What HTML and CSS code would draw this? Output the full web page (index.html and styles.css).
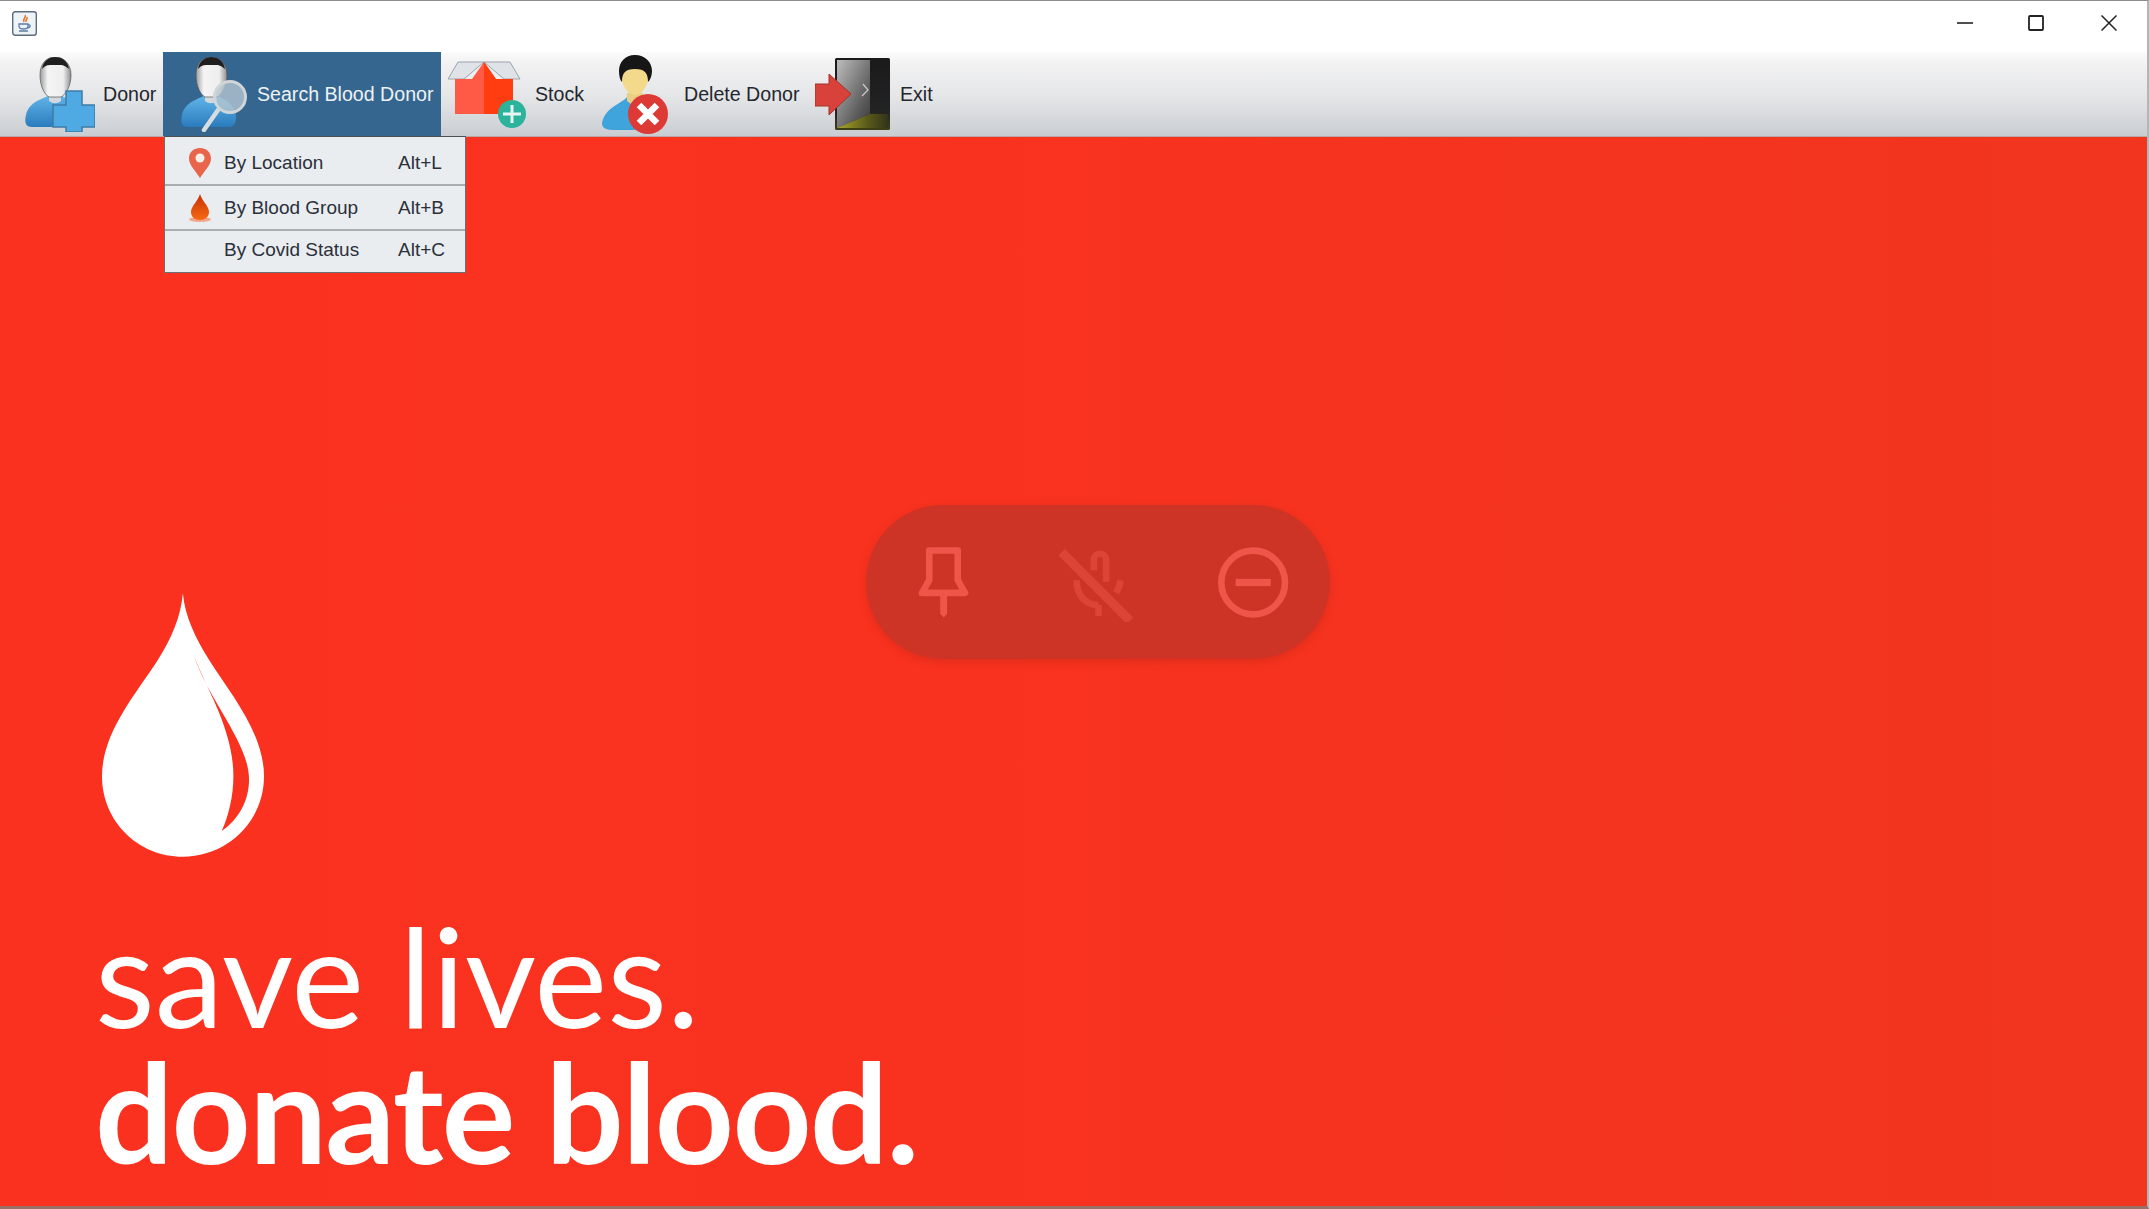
FILE: index.html
```html
<!DOCTYPE html>
<html lang="en">
<head>
    <meta charset="UTF-8">
    <meta name="viewport" content="width=device-width, initial-scale=1.0">
    <title>Blood Bank</title>
    <link rel="stylesheet" href="styles.css">
</head>
<body>
    <svg class="defs" width="0" height="0">
        <defs>
            <linearGradient id="faceGrey" x1="0" y1="0" x2="1" y2="0">
                <stop offset="0" stop-color="#9d9d9d"/>
                <stop offset="0.25" stop-color="#f4f4f4"/>
                <stop offset="0.75" stop-color="#eeeeee"/>
                <stop offset="1" stop-color="#8e8e8e"/>
            </linearGradient>
            <linearGradient id="shirt" x1="0" y1="0" x2="0" y2="1">
                <stop offset="0" stop-color="#62b6ea"/>
                <stop offset="1" stop-color="#2a7bbd"/>
            </linearGradient>
            <linearGradient id="door" x1="0" y1="0" x2="1" y2="1">
                <stop offset="0" stop-color="#bdbdbd"/>
                <stop offset="0.7" stop-color="#5c5c5c"/>
                <stop offset="1" stop-color="#3a3a3a"/>
            </linearGradient>
            <linearGradient id="doorDark" x1="0" y1="0" x2="0" y2="1">
                <stop offset="0" stop-color="#1a1a1a"/>
                <stop offset="0.75" stop-color="#232323"/>
                <stop offset="1" stop-color="#3f3f16"/>
            </linearGradient>
            <linearGradient id="doorFloor" x1="0" y1="0" x2="1" y2="0">
                <stop offset="0" stop-color="#a8a62c"/>
                <stop offset="0.6" stop-color="#5a5a1a"/>
                <stop offset="1" stop-color="#33331a"/>
            </linearGradient>
            <linearGradient id="bloodFill" x1="0" y1="0" x2="0" y2="1">
                <stop offset="0" stop-color="#c92f05"/>
                <stop offset="1" stop-color="#f56a12"/>
            </linearGradient>
            <symbol id="bust" viewBox="0 0 62 75">
                <path d="M25 38C20 42 5 44 2 58C0 66 2 70 8 70L50 70C56 70 58 60 54 52C50 44 42 42 37 38C34 44 28 44 25 38Z" fill="url(#shirt)"/>
                <path d="M25 36L37 36L37 44C33 47 29 47 25 44Z" fill="#d5d8da"/>
                <path d="M16 18C16 6 23 0 31 0C39 0 47 6 47 18C47 30 41 38 37 40L25 40C21 38 16 30 16 18Z" fill="url(#faceGrey)" stroke="#555" stroke-width="0.7"/>
                <path d="M18 12C19 4 25 0 31 0C38 0 44 4 45 12C40 7 36 8 31 8C26 8 22 7 18 12Z" fill="#1f1f1f"/>
            </symbol>
        </defs>
    </svg>

    <div class="window">
        <div class="titlebar">
            <svg class="app-icon" viewBox="0 0 25 25">
                <rect x="0.7" y="0.7" width="23.6" height="23.6" rx="2.5" fill="#eef3f8" stroke="#5d6c7c" stroke-width="1.4"/>
                <path d="M13 4C15 6 10 8 12 11M15 6C16 8 13 9 14 11" fill="none" stroke="#e2711d" stroke-width="1.5"/>
                <path d="M7 13H16V15C16 17 14 18 11.500 18C9 18 7 17 7 15ZM16 14C19 13 19 17 15 17M7 20H16" fill="none" stroke="#5a7ea6" stroke-width="1.3"/>
            </svg>
            <div class="win-controls">
                <svg viewBox="0 0 16 16"><path d="M0 8H16" stroke="#222" stroke-width="1.6"/></svg>
                <svg viewBox="0 0 16 16"><rect x="1" y="1" width="14" height="14" rx="1" fill="none" stroke="#222" stroke-width="1.8"/></svg>
                <svg class="win-close" viewBox="0 0 16 16"><path d="M0.500 0.500L15.500 15.500M15.500 0.500L0.500 15.500" stroke="#222" stroke-width="1.5"/></svg>
            </div>
        </div>

        <div class="toolbar">
            <div class="tool tool-donor">
                <svg class="icon-donor" viewBox="0 0 71 75">
                    <use href="#bust" x="0" y="0" width="62" height="75"/>
                    <path d="M42 34H58V48H71V70H58V75H42V70H29V48H42Z" fill="#4fa9e2" stroke="#3f7ba8" stroke-width="1.500"/>
                </svg>
                <span>Donor</span>
            </div>
            <div class="tool tool-active">
                <svg class="icon-search" viewBox="0 0 68 75">
                    <use href="#bust" x="0" y="0" width="62" height="75"/>
                    <path d="M38 53L24 73" stroke="#d8dcdf" stroke-width="4.500" stroke-linecap="round"/>
                    <circle cx="50" cy="40" r="15.500" fill="#b4c5d0" fill-opacity="0.8" stroke="#cfd5d9" stroke-width="3"/>
                </svg>
                <span>Search Blood Donor</span>
                <div class="menu">
                    <div class="menu-row">
                        <svg class="menu-icon" viewBox="0 0 24 32">
                            <path d="M12 31C7 23 1 18 1 11.500C1 5 6 1 12 1C18 1 23 5 23 11.500C23 18 17 23 12 31Z" fill="#e8644a"/>
                            <circle cx="12" cy="11" r="4.500" fill="#f5efe8"/>
                        </svg>
                        <span class="menu-label">By Location</span>
                        <span class="menu-key">Alt+L</span>
                    </div>
                    <div class="menu-row">
                        <svg class="menu-icon" viewBox="0 0 24 32">
                            <ellipse cx="12" cy="27.500" rx="11" ry="2.500" fill="#f3a58a"/>
                            <path d="M12 2C14 9 21 14 21 20C21 25 17 28 12 28C7 28 3 25 3 20C3 14 10 9 12 2Z" fill="url(#bloodFill)"/>
                        </svg>
                        <span class="menu-label">By Blood Group</span>
                        <span class="menu-key">Alt+B</span>
                    </div>
                    <div class="menu-row">
                        <span class="menu-icon"></span>
                        <span class="menu-label">By Covid Status</span>
                        <span class="menu-key">Alt+C</span>
                    </div>
                </div>
            </div>
            <div class="tool tool-stock">
                <svg class="icon-stock" viewBox="0 0 78 67">
                    <path d="M10 1H62L72 18H56L36 1L16 18H0Z" fill="#dfe3e8" stroke="#9aa3ab" stroke-width="1"/>
                    <path d="M36 1L48 18H65V53H7V18H24Z" fill="#ff5a45"/>
                    <path d="M36 1L48 18H65V53H36Z" fill="#ff3d10"/>
                    <circle cx="64" cy="53" r="14" fill="#2bb39b"/>
                    <path d="M64 44V62M55 53H73" stroke="#e6f7f3" stroke-width="3"/>
                </svg>
                <span>Stock</span>
            </div>
            <div class="tool tool-delete">
                <svg class="icon-delete" viewBox="0 0 67 79">
                    <path d="M26 42C22 48 4 52 1 68C1 74 6 75 14 75L50 75L56 50L42 42Z" fill="#3fa3dc"/>
                    <path d="M26 38H42V46L34 52L26 46Z" fill="#e9cf84"/>
                    <path d="M20 18C20 8 27 6 34 6C41 6 48 8 48 18C48 30 41 40 34 40C27 40 20 30 20 18Z" fill="#f3d98a"/>
                    <path d="M34 0C24 0 18 7 18 16C18 21 19 25 21 27C21 18 24 14 34 14C44 14 47 18 47 27C49 25 51 21 51 16C51 7 44 0 34 0Z" fill="#161616"/>
                    <circle cx="47" cy="59" r="20" fill="#dd3a36"/>
                    <path d="M38 50L56 68M56 50L38 68" stroke="#fff" stroke-width="6.500"/>
                </svg>
                <span>Delete Donor</span>
            </div>
            <div class="tool tool-exit">
                <svg class="icon-exit" viewBox="0 0 75 72">
                    <rect x="20" y="0" width="55" height="72" rx="1.500" fill="url(#doorDark)"/>
                    <path d="M22 2H55V56L22 70Z" fill="url(#door)"/>
                    <path d="M22 70L55 56H73V70Z" fill="url(#doorFloor)"/>
                    <path d="M48 26L53 32L47 38" fill="none" stroke="#c9c9c9" stroke-width="1.300"/>
                    <path d="M0 26H14V16L36 36L14 57V48H0Z" fill="#d9423a" stroke="#a83128" stroke-width="1"/>
                </svg>
                <span>Exit</span>
            </div>
        </div>

        <div class="hero">
            <svg class="drop" viewBox="125 40 487 792">
                <path d="M368 40C375 110 405 175 450 245C510 340 612 460 612 590C612 725 503 832 368 832C233 832 125 725 125 590C125 460 225 345 290 245C335 175 362 110 368 40Z" fill="#fff"/>
                <path d="M400 225C440 330 520 450 520 590C520 650 505 710 485 755C535 720 567 665 567 600C567 490 450 370 400 225Z" fill="#f9321f"/>
            </svg>
            <h1 class="slogan">
                <span class="slogan-light">save lives.</span>
                <span class="slogan-bold">donate blood.</span>
            </h1>

            <div class="call-pill">
                <svg class="pill-pin" viewBox="200 165 160 222">
                    <path d="M237 181H323V270L345 309H215L237 270Z" fill="none" stroke="currentColor" stroke-width="20" stroke-linejoin="round"/>
                    <path d="M270 318H291V372L281 383L270 372Z" fill="currentColor"/>
                </svg>
                <svg class="pill-mic" viewBox="620 158 235 238">
                    <path d="M731 240V205A19 19 0 0 1 768 205V275M679 270C679 320 710 345 745 345M745 345V378M811 270C810 285 805 297 798 308" fill="none" stroke="currentColor" stroke-width="20"/>
                    <path d="M634 186L840 392" stroke="currentColor" stroke-width="28"/>
                </svg>
                <svg class="pill-end" viewBox="1100 167 220 220">
                    <circle cx="1209" cy="277" r="96" fill="none" stroke="currentColor" stroke-width="20"/>
                    <rect x="1156" y="266" width="106" height="22" fill="currentColor"/>
                </svg>
            </div>
        </div>
    </div>
</body>
</html>
```

FILE: styles.css
```css
* {
    box-sizing: border-box;
}

html, body {
    height: 100%;
    margin: 0;
}

body {
    font-family: "Liberation Sans", Arial, sans-serif;
    background: #fff;
    overflow: hidden;
}

.defs {
    display: block;
    height: 0;
}

.window {
    display: flex;
    flex-direction: column;
    height: 100vh;
    border-top: 1px solid #8c8c8c;
    border-right: 2px solid #b5b5b5;
    border-bottom: 3px solid #9a6f66;
}

/* title bar */
.titlebar {
    display: flex;
    align-items: center;
    justify-content: space-between;
    height: 51px;
    padding: 0 30px 7px 12px;
    background: #fff;
}

.app-icon {
    width: 25px;
    height: 25px;
}

.win-controls {
    display: flex;
    gap: 55px;
}

.win-controls svg {
    width: 16px;
    height: 16px;
}

.win-controls .win-close {
    margin-left: 2px;
}

/* toolbar */
.toolbar {
    display: flex;
    align-items: stretch;
    height: 85px;
    background: linear-gradient(#fbfbfb 0%, #f2f2f3 14%, #e4e5e7 55%, #c9cdd2 100%);
    border-bottom: 1px solid #b9a9a6;
}

.tool {
    display: flex;
    align-items: center;
    color: #23272e;
    font-size: 19.6px;
}

.tool span {
    white-space: nowrap;
}

.tool-donor {
    width: 163px;
    padding-left: 24px;
    gap: 8px;
}

.tool-active {
    position: relative;
    width: 278px;
    padding-left: 17px;
    gap: 9px;
    background: #34668f;
    color: #eef2f5;
}

.tool-stock {
    width: 160px;
    padding-left: 7px;
    gap: 9px;
}

.tool-delete {
    width: 214px;
    gap: 16px;
}

.tool-exit {
    gap: 10px;
}

.icon-donor {
    width: 71px;
    height: 75px;
}

.icon-search {
    width: 68px;
    height: 75px;
}

.icon-stock {
    width: 78px;
    height: 67px;
}

.icon-delete {
    width: 67px;
    height: 79px;
}

.icon-exit {
    width: 75px;
    height: 72px;
}

/* dropdown */
.menu {
    position: absolute;
    top: 100%;
    left: 1px;
    z-index: 2;
    width: 302px;
    background: #e9edf0;
    border: 1px solid #6b7075;
    border-top-color: #4d5156;
    color: #2b303a;
    font-size: 19px;
}

.menu-row {
    display: flex;
    align-items: center;
    height: 45px;
    padding-left: 23px;
    border-bottom: 2px solid #a9adb2;
}

.menu-row:first-child {
    height: 49px;
    padding-top: 4px;
}

.menu-row:last-child {
    height: 41px;
    padding-bottom: 4px;
    border-bottom: none;
}

.menu-icon {
    display: block;
    width: 24px;
    height: 32px;
    margin-right: 12px;
}

.menu-label {
    width: 174px;
}

/* main picture */
.hero {
    position: relative;
    flex: 1;
    display: flex;
    flex-direction: column;
    padding: 456px 0 0 95px;
    background: linear-gradient(90deg, #fb3120 0%, #f9321f 40%, #f1351f 100%);
    color: #fff;
}

.drop {
    display: block;
    width: 162px;
    height: 264px;
    margin-left: 7px;
}

.slogan {
    margin: 50px 0 0;
    font-family: Lato, "Open Sans", sans-serif;
    font-size: 138px;
    line-height: 136px;
    font-weight: 400;
}

.slogan span {
    display: block;
}

.slogan-bold {
    font-weight: 700;
    letter-spacing: -1.7px;
}

.call-pill {
    position: absolute;
    top: 368px;
    left: 866px;
    display: flex;
    align-items: center;
    gap: 84px;
    width: 464px;
    height: 154px;
    padding-left: 51px;
    border-radius: 77px;
    background: #cd3425;
    box-shadow: 0 3px 8px rgba(150, 30, 20, 0.25);
    color: #ef5548;
}

.pill-pin {
    width: 53px;
    height: 74px;
}

.pill-mic {
    width: 78px;
    height: 79px;
    margin-left: 3px;
    color: #dc4436;
}

.pill-end {
    width: 73px;
    height: 73px;
    margin-left: -2px;
}
```
